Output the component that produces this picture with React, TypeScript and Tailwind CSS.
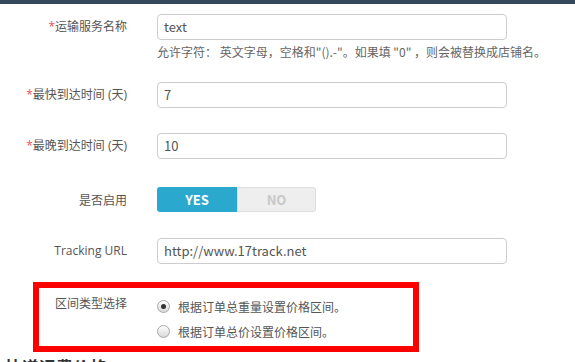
import React from "react";

const font = { fontFamily: '"Noto Sans CJK SC", "Noto Sans", sans-serif' };
const labelFont = { fontFamily: '"Open Sans", "Noto Sans CJK SC", sans-serif' };

function Label({ children, req }: { children: React.ReactNode; req?: boolean }) {
  return (
    <div className="w-[127px] shrink-0 text-right text-[12px] leading-[26px] text-[#555]" style={labelFont}>
      {req && <span className="text-[#f0505a]">*</span>}
      {children}
    </div>
  );
}

function Input({ value }: { value: string }) {
  return (
    <div className="w-[350px] h-[26px] border border-[#cccccc] rounded-[4px] bg-white px-[6px] flex items-center text-[13px] text-[#555]">
      {value}
    </div>
  );
}

function Radio({ checked }: { checked?: boolean }) {
  return (
    <div className="w-[13px] h-[13px] rounded-full border border-[#a8a8a8] bg-gradient-to-b from-[#ffffff] to-[#d8d8d8] flex items-center justify-center shrink-0">
      {checked && <div className="w-[5px] h-[5px] rounded-full bg-[#333]" />}
    </div>
  );
}

export default function App() {
  return (
    <div className="w-[575px] h-[362px] overflow-hidden bg-white" style={font}>
      <div className="h-[4px] bg-[#35475a]" />
      <div className="flex flex-col">
        <div className="flex items-start mt-[10px]">
          <Label req>运输服务名称</Label>
          <div className="ml-[30px] flex flex-col">
            <Input value="text" />
            <div className="mt-[4px] text-[12px] leading-[16px] text-[#666] whitespace-nowrap">
              允许字符： 英文字母，空格和"().-"。如果填 "0" ，则会被替换成店铺名。
            </div>
          </div>
        </div>
        <div className="flex items-start mt-[22px]">
          <Label req>最快到达时间 (天)</Label>
          <div className="ml-[30px]">
            <Input value="7" />
          </div>
        </div>
        <div className="flex items-start mt-[25px]">
          <Label req>最晚到达时间 (天)</Label>
          <div className="ml-[30px]">
            <Input value="10" />
          </div>
        </div>
        <div className="flex items-center mt-[28px]">
          <div className="w-[127px] shrink-0 text-right text-[12px] leading-[25px] text-[#555]">是否启用</div>
          <div className="ml-[30px] flex h-[25px]">
            <div className="w-[80px] h-[25px] bg-[#2ba8cd] rounded-l-[3px] flex items-center justify-center text-white text-[13px] font-bold">
              YES
            </div>
            <div className="w-[79px] h-[25px] bg-[#eeeeee] border border-[#dddddd] rounded-r-[3px] flex items-center justify-center text-[#c8c8c8] text-[13px] font-bold">
              NO
            </div>
          </div>
        </div>
        <div className="flex items-start mt-[26px]">
          <Label>Tracking URL</Label>
          <div className="ml-[30px]">
            <Input value="http://www.17track.net" />
          </div>
        </div>
        <div className="ml-[33px] mt-[18px] w-[386px] h-[70px] border-[6px] border-[#ff0000] flex items-start pt-[7px]">
          <div className="w-[88px] shrink-0 text-right text-[12px] leading-[16px] text-[#555]">区间类型选择</div>
          <div className="ml-[30px] flex flex-col">
            <div className="h-[25px] flex items-center gap-[8px] text-[12px] text-[#555] -mt-[1px]">
              <Radio checked />
              <span>根据订单总重量设置价格区间。</span>
            </div>
            <div className="h-[25px] flex items-center gap-[8px] text-[12px] text-[#555]">
              <Radio />
              <span>根据订单总价设置价格区间。</span>
            </div>
          </div>
        </div>
        <div className="mt-[5px] ml-[5px] text-[17px] leading-[20px] font-bold text-[#333] whitespace-nowrap">快递运费价格</div>
      </div>
    </div>
  );
}
